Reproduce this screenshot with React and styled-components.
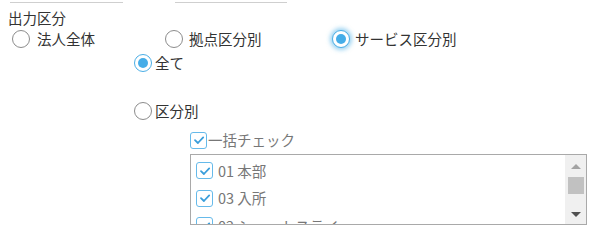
import React from 'react';
import styled, { createGlobalStyle, css } from 'styled-components';

const GlobalStyle = createGlobalStyle`
  html, body {
    margin: 0;
    padding: 0;
    background: #fff;
  }
  body {
    font-family: "Noto Sans CJK JP", "Noto Sans", sans-serif;
    font-size: 14.5px;
    color: #333;
  }
`;

const Page = styled.div`
  width: 601px;
  height: 237px;
  overflow: hidden;
  display: flex;
  flex-direction: column;
`;

const TopRules = styled.div`
  display: flex;
  padding: 2px 0 0 10px;
  gap: 52px;
`;

const Rule = styled.div`
  width: ${({ $w }) => $w}px;
  height: 1px;
  background: #cfcfcf;
`;

const Title = styled.div`
  margin: 5px 0 0 8px;
  height: 20px;
  line-height: 20px;
  color: #333;
`;

const Row = styled.div`
  display: flex;
  align-items: center;
  height: 18px;
  margin-top: ${({ $top }) => $top || 0}px;
  padding-left: ${({ $indent }) => $indent || 0}px;
`;

const Label = styled.label`
  display: flex;
  align-items: center;
  gap: ${({ $gap }) => $gap}px;
  width: ${({ $w }) => ($w ? `${$w}px` : 'auto')};
  line-height: 18px;
  color: ${({ $muted }) => ($muted ? '#777' : '#333')};
  white-space: nowrap;
`;

const RadioMark = styled.span`
  box-sizing: border-box;
  flex: none;
  width: 18px;
  height: 18px;
  border-radius: 50%;
  border: 1.5px solid #8c8c8c;
  background: #fff;
  display: flex;
  align-items: center;
  justify-content: center;

  ${({ $checked }) =>
    $checked &&
    css`
      border-color: #4aaee6;
      &::after {
        content: '';
        width: 10px;
        height: 10px;
        border-radius: 50%;
        background: #45ade8;
      }
    `}

  ${({ $focus }) =>
    $focus &&
    css`
      box-shadow: 0 0 4px 2px rgba(74, 174, 230, 0.55);
    `}
`;

const CheckMark = styled.span`
  box-sizing: border-box;
  flex: none;
  width: 17px;
  height: 17px;
  border-radius: 3px;
  border: 1.5px solid #66baea;
  background: #fff;
  display: flex;
  align-items: center;
  justify-content: center;

  svg {
    width: 12px;
    height: 12px;
  }
`;

const Radio = ({ checked, focus, gap = 6, width, children }) => (
  <Label $gap={gap} $w={width}>
    <RadioMark $checked={checked} $focus={focus} />
    <span>{children}</span>
  </Label>
);

const Check = ({ gap, muted, children }) => (
  <Label $gap={gap} $muted={muted}>
    <CheckMark>
      <svg viewBox="0 0 12 12">
        <path d="M2 6.2 L4.9 9 L10.2 3.4" fill="none" stroke="#3a9edb" strokeWidth="1.8" strokeLinecap="round" strokeLinejoin="round" />
      </svg>
    </CheckMark>
    <span>{children}</span>
  </Label>
);

const ListBox = styled.div`
  box-sizing: border-box;
  margin: 5px 0 0 190px;
  width: 397px;
  height: 71px;
  border: 1px solid #a9a9a9;
  display: flex;
  overflow: hidden;
`;

const ListItems = styled.div`
  flex: 1;
  padding: 2px 0 0 5px;
  overflow: hidden;
`;

const ListItem = styled.div`
  height: 27.5px;
  display: flex;
  align-items: center;
  color: #666;
`;

const ScrollBar = styled.div`
  width: 21px;
  background: #f0f0f0;
  display: flex;
  flex-direction: column;
  align-items: center;
`;

const ScrollArrow = styled.div`
  height: ${({ $h }) => $h}px;
  display: flex;
  align-items: center;
  justify-content: center;
  width: 100%;
`;

const Triangle = styled.span`
  width: 0;
  height: 0;
  border-left: 5px solid transparent;
  border-right: 5px solid transparent;
  ${({ $down }) =>
    $down
      ? css`border-top: 5px solid #505050;`
      : css`border-bottom: 5px solid #a3a3a3;`}
`;

const Thumb = styled.div`
  width: 16px;
  height: 17px;
  background: #c1c1c1;
`;

const Spacer = styled.div`
  flex: 1;
`;

const items = ['01 本部', '03 入所', '02 ショートステイ'];

export default function App() {
  return (
    <>
      <GlobalStyle />
      <Page>
        <TopRules>
          <Rule $w={113} />
          <Rule $w={112} />
        </TopRules>
        <Title>出力区分</Title>
        <Row $top={2} $indent={12}>
          <Radio gap={7} width={153}>法人全体</Radio>
          <Radio gap={6} width={167}>拠点区分別</Radio>
          <Radio gap={5} checked focus>サービス区分別</Radio>
        </Row>
        <Row $top={6} $indent={134}>
          <Radio gap={3} checked>全て</Radio>
        </Row>
        <Row $top={30} $indent={134}>
          <Radio gap={3}>区分別</Radio>
        </Row>
        <Row $top={11} $indent={190}>
          <Check gap={1} muted>一括チェック</Check>
        </Row>
        <ListBox>
          <ListItems>
            {items.map((it) => (
              <ListItem key={it}>
                <Check gap={5} muted>{it}</Check>
              </ListItem>
            ))}
          </ListItems>
          <ScrollBar>
            <ScrollArrow $h={22}>
              <Triangle />
            </ScrollArrow>
            <Thumb />
            <Spacer />
            <ScrollArrow $h={20}>
              <Triangle $down />
            </ScrollArrow>
          </ScrollBar>
        </ListBox>
      </Page>
    </>
  );
}
